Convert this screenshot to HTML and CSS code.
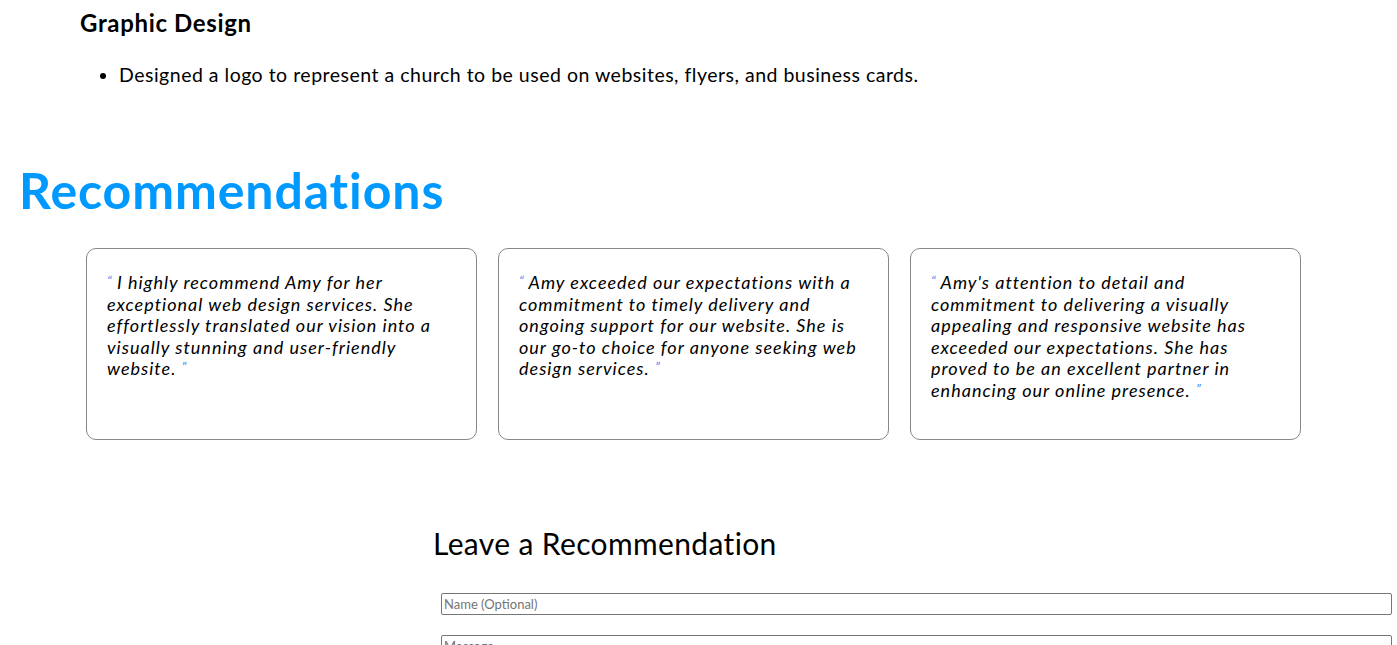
FILE: index.html
```html
<!DOCTYPE html>
<html>
<head>
<meta charset="utf-8">
<link rel="stylesheet" href="styles.css">
</head>
<body>
<section class="skills">
  <h3 class="skill-title">Graphic Design</h3>
  <ul class="skill-list">
    <li>Designed a logo to represent a church to be used on websites, flyers, and business cards.</li>
  </ul>
</section>
<section class="recs">
  <h1 class="recs-title">Recommendations</h1>
  <div class="cards">
    <div class="card"><p><span class="q">“</span> I highly recommend Amy for her exceptional web design services. She effortlessly translated our vision into a visually stunning and user-friendly website. <span class="q">”</span></p></div>
    <div class="card"><p><span class="q">“</span> Amy exceeded our expectations with a commitment to timely delivery and ongoing support for our website. She is our go-to choice for anyone seeking web design services. <span class="q">”</span></p></div>
    <div class="card"><p><span class="q">“</span> Amy's attention to detail and commitment to delivering a visually appealing and responsive website has exceeded our expectations. She has proved to be an excellent partner in enhancing our online presence. <span class="q">”</span></p></div>
  </div>
</section>
<section class="leave">
  <h2 class="leave-title">Leave a Recommendation</h2>
  <div class="form">
    <input class="field" type="text" placeholder="Name (Optional)">
    <input class="field" type="text" placeholder="Message">
  </div>
</section>
</body>
</html>
```
FILE: styles.css
```css
html, body {
  margin: 0;
  padding: 0;
  background: #fff;
}
body {
  font-family: Lato, "Liberation Sans", sans-serif;
  color: #000;
}
.skills {
  padding-left: 80px;
  padding-top: 9px;
}
.skill-title {
  margin: 0;
  font-size: 24px;
  font-weight: bold;
  line-height: 28px;
  letter-spacing: 0.65px;
}
.skill-list {
  margin: 26px 0 0 0;
  padding-left: 39px;
  font-size: 19.5px;
  line-height: 24px;
  letter-spacing: 0.5px;
}
.recs {
  padding-top: 73px;
}
.recs-title {
  margin: 0 0 0 19px;
  font-size: 50px;
  line-height: 60px;
  font-weight: bold;
  color: #0099ff;
  letter-spacing: 0.9px;
}
.cards {
  display: flex;
  gap: 21px;
  margin: 28px 0 0 86px;
}
.card {
  width: 349px;
  height: 147px;
  border: 1px solid #888;
  border-radius: 10px;
  padding: 23px 20px 20px 20px;
}
.card p {
  margin: 0;
  font-style: italic;
  font-size: 18px;
  line-height: 21.5px;
  letter-spacing: 1px;
}
.q {
  color: #4a8ff2;
  font-size: 14px;
  line-height: 0;
  vertical-align: 3px;
  letter-spacing: 0;
}
.leave {
  padding: 85px 0 0 433px;
}
.leave-title {
  margin: 0;
  font-size: 30px;
  font-weight: normal;
  line-height: 36px;
  letter-spacing: 0.36px;
}
.form {
  display: flex;
  flex-direction: column;
  gap: 20px;
  margin: 32px 5px 0 8px;
}
.field {
  box-sizing: border-box;
  height: 22px;
  width: 100%;
  margin: 0;
  padding: 1px 2px;
  border: 1px solid #767676;
  border-radius: 2px;
  font-family: Lato, "Liberation Sans", sans-serif;
  font-size: 13px;
}
.field::placeholder {
  color: #757575;
}
```
